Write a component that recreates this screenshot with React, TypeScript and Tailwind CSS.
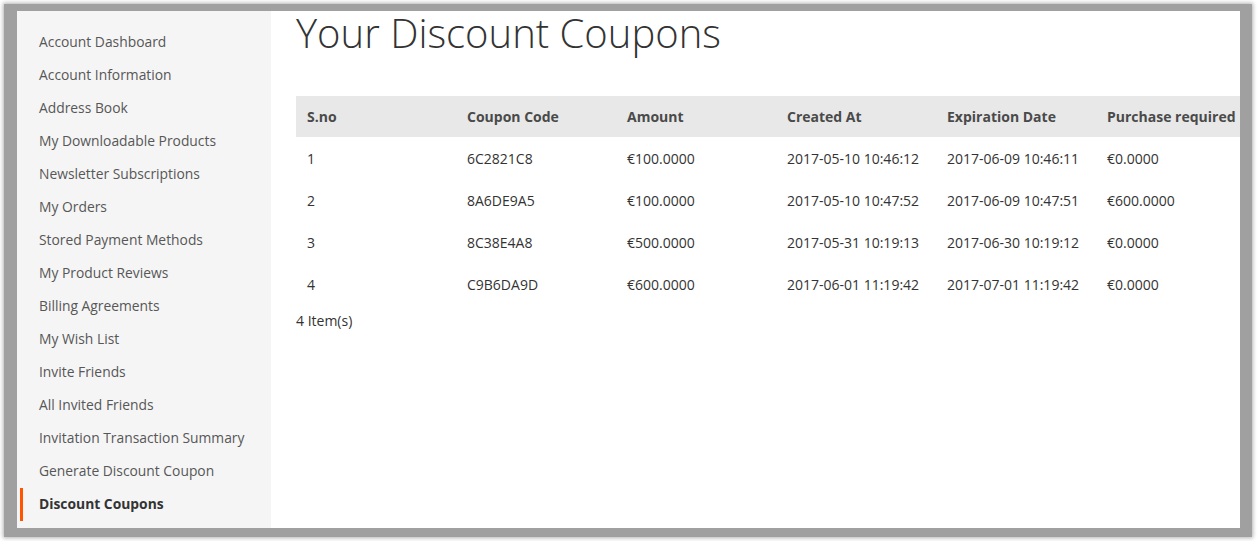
import React from "react";

const navItems = [
  "Account Dashboard",
  "Account Information",
  "Address Book",
  "My Downloadable Products",
  "Newsletter Subscriptions",
  "My Orders",
  "Stored Payment Methods",
  "My Product Reviews",
  "Billing Agreements",
  "My Wish List",
  "Invite Friends",
  "All Invited Friends",
  "Invitation Transaction Summary",
  "Generate Discount Coupon",
  "Discount Coupons",
];

const columns = [
  "S.no",
  "Coupon Code",
  "Amount",
  "Created At",
  "Expiration Date",
  "Purchase required",
];

const coupons = [
  ["1", "6C2821C8", "€100.0000", "2017-05-10 10:46:12", "2017-06-09 10:46:11", "€0.0000"],
  ["2", "8A6DE9A5", "€100.0000", "2017-05-10 10:47:52", "2017-06-09 10:47:51", "€600.0000"],
  ["3", "8C38E4A8", "€500.0000", "2017-05-31 10:19:13", "2017-06-30 10:19:12", "€0.0000"],
  ["4", "C9B6DA9D", "€600.0000", "2017-06-01 11:19:42", "2017-07-01 11:19:42", "€0.0000"],
];

export default function App() {
  const active = "Discount Coupons";

  return (
    <div
      className="w-[1258px] h-[541px] bg-white overflow-hidden pt-[4px] pl-[4px]"
      style={{ fontFamily: '"Open Sans", "Liberation Sans", sans-serif' }}
    >
      <div className="w-[1248px] h-[533px] border-[#a0a0a0] border-l-[13px] border-t-[7px] border-r-[12px] border-b-[9px] shadow-[0_0_4px_1px_rgba(0,0,0,0.3)] flex bg-white">
        {/* sidebar */}
        <nav className="w-[254px] shrink-0 bg-[#f5f5f5] pt-[15px] pl-[3px]">
          {navItems.map((item) => (
            <div
              key={item}
              className={
                item === active
                  ? "h-[33px] flex items-center border-l-[3px] border-[#ff5501] pl-[16px] text-[13.85px] font-bold text-[#333]"
                  : "h-[33px] flex items-center border-l-[3px] border-transparent pl-[16px] text-[13.85px] text-[#575757]"
              }
            >
              {item}
            </div>
          ))}
        </nav>

        {/* main */}
        <main className="flex-1 overflow-hidden pl-[25px]">
          <h1 className="text-[40px] leading-[44px] font-light text-[#333] mb-[41px] whitespace-nowrap">
            Your Discount Coupons
          </h1>

          <table className="table-fixed w-[960px] border-collapse text-[14px] text-[#333]">
            <thead>
              <tr className="bg-[#e8e8e8] h-[41px]">
                {columns.map((c) => (
                  <th key={c} className="w-[160px] pl-[11px] text-left font-bold text-[#4a4a4a] whitespace-nowrap">
                    {c}
                  </th>
                ))}
              </tr>
            </thead>
            <tbody>
              {coupons.map((row) => (
                <tr key={row[0]} className="h-[42px]">
                  {row.map((cell, i) => (
                    <td key={i} className="pl-[11px] whitespace-nowrap">
                      {cell}
                    </td>
                  ))}
                </tr>
              ))}
            </tbody>
          </table>

          <div className="mt-[6px] text-[14px] leading-[20px] text-[#333]">4 Item(s)</div>
        </main>
      </div>
    </div>
  );
}
